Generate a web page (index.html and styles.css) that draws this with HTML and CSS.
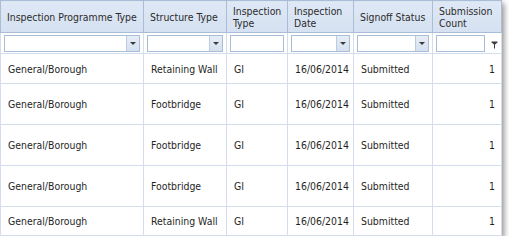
FILE: index.html
```html
<!DOCTYPE html>
<html>
<head>
<meta charset="utf-8">
<link rel="stylesheet" href="styles.css">
</head>
<body>
<div class="grid">
  <table>
    <colgroup>
      <col class="c1"><col class="c2"><col class="c3"><col class="c4"><col class="c5"><col class="c6">
    </colgroup>
    <thead>
      <tr class="hdr">
        <th>Inspection Programme Type</th>
        <th>Structure Type</th>
        <th>Inspection<br>Type</th>
        <th>Inspection<br>Date</th>
        <th>Signoff Status</th>
        <th>Submission<br>Count</th>
      </tr>
      <tr class="filter">
        <td><div class="combo"><span class="box"></span><span class="btn"><i></i></span></div></td>
        <td><div class="combo"><span class="box"></span><span class="btn"><i></i></span></div></td>
        <td><div class="combo"><span class="box"></span></div></td>
        <td><div class="combo"><span class="box"></span><span class="btn"><i></i></span></div></td>
        <td><div class="combo"><span class="box"></span><span class="btn"><i></i></span></div></td>
        <td class="last"><div class="lastwrap"><div class="combo"><span class="box"></span></div>
          <svg class="funnel" width="7" height="8" viewBox="0 0 7 8"><path d="M0.5 0.5h6v1L4 3.5V7.5H3V3.5L0.5 1.5z" fill="#3c3c3c"/></svg></div></td>
      </tr>
    </thead>
    <tbody>
      <tr class="r1"><td>General/Borough</td><td>Retaining Wall</td><td>GI</td><td>16/06/2014</td><td>Submitted</td><td class="num">1</td></tr>
      <tr class="r2"><td>General/Borough</td><td>Footbridge</td><td>GI</td><td>16/06/2014</td><td>Submitted</td><td class="num">1</td></tr>
      <tr class="r2"><td>General/Borough</td><td>Footbridge</td><td>GI</td><td>16/06/2014</td><td>Submitted</td><td class="num">1</td></tr>
      <tr class="r2"><td>General/Borough</td><td>Footbridge</td><td>GI</td><td>16/06/2014</td><td>Submitted</td><td class="num">1</td></tr>
      <tr class="r5"><td>General/Borough</td><td>Retaining Wall</td><td>GI</td><td>16/06/2014</td><td>Submitted</td><td class="num">1</td></tr>
    </tbody>
  </table>
</div>
</body>
</html>
```
FILE: styles.css
```css
html, body {
  margin: 0;
  padding: 0;
  background: #ffffff;
}
body {
  font-family: "DejaVu Sans Condensed", "DejaVu Sans", sans-serif;
  font-size: 10.4px;
  color: #1f1f1f;
}
.grid {
  width: 501px;
  box-shadow: 3px 3px 6px rgba(0, 0, 0, 0.45);
}
table {
  width: 501px;
  border-collapse: collapse;
  table-layout: fixed;
  border: 1px solid #a9bdd7;
}
col.c1 { width: 143px; }
col.c2 { width: 83px; }
col.c3 { width: 61px; }
col.c4 { width: 66px; }
col.c5 { width: 79px; }
col.c6 { width: 69px; }
th, td {
  padding: 0;
  border: 1px solid #d3dded;
  vertical-align: middle;
  text-align: left;
  white-space: nowrap;
}
tr.hdr th {
  height: 30px;
  background: linear-gradient(#dfe8f5, #d5e1f1);
  border: 1px solid #a9bdd7;
  border-top: none;
  font-weight: normal;
  color: #2b2b2b;
  padding: 1px 4px 0 6px;
  line-height: 12px;
}
tr.filter td {
  height: 20px;
  padding: 0 3px;
  background: #ffffff;
}
.combo {
  display: flex;
  height: 17px;
  border: 1px solid #a9bdd7;
  box-sizing: border-box;
  background: #fff;
}
.box { flex: 1; }
.btn {
  width: 12px;
  border-left: 1px solid #bccbe0;
  background: linear-gradient(#e6edf7, #d5e0ef);
  display: flex;
  align-items: center;
  justify-content: center;
}
.btn i {
  width: 0;
  height: 0;
  border-left: 3px solid transparent;
  border-right: 3px solid transparent;
  border-top: 3px solid #3a3a3a;
}
td.last { padding-right: 2px; }
.lastwrap {
  display: flex;
  align-items: center;
  gap: 6px;
}
.lastwrap .combo { flex: 1; }
.funnel { flex: none; margin-top: 4px; }
tbody td { padding: 0 6px 0 7px; }
tr.r1 td { height: 29px; }
tr.r2 td { height: 40px; }
tr.r5 td { height: 28px; }
td.num { text-align: right; padding-right: 6px; }
```
